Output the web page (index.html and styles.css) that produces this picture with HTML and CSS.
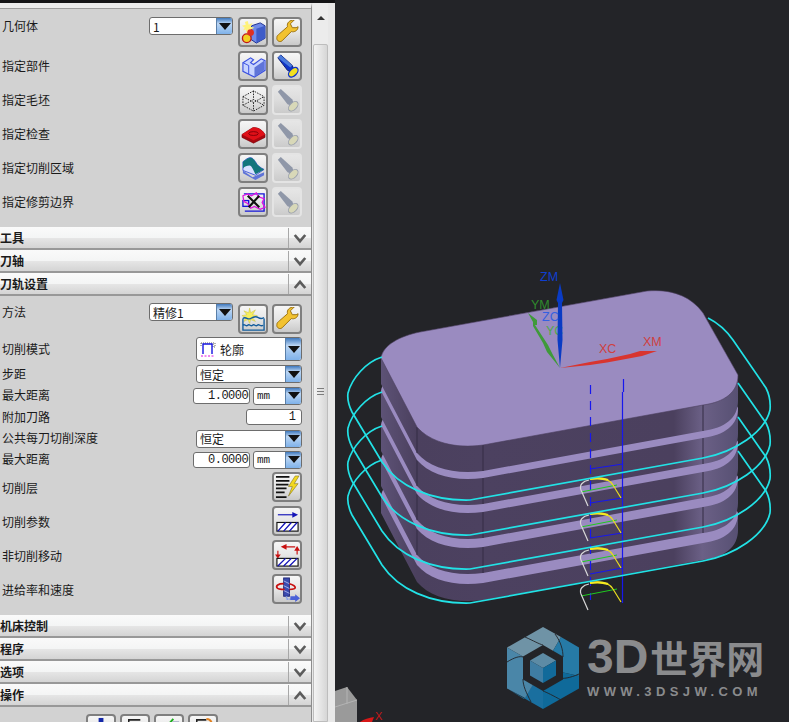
FILE: index.html
```html
<!DOCTYPE html>
<html lang="zh">
<head>
  <meta charset="utf-8">
  <title>刀轨设置</title>
  <link rel="stylesheet" href="styles.css">
</head>
<body>
  <!-- icons used by the panel buttons -->
  <svg class="sprite" xmlns="http://www.w3.org/2000/svg">
    <symbol id="i-geom" viewBox="0 0 26 26">
      <path d="M11 6l9-3 5 3v13l-9 5-6-4z" fill="#6f8ae8" stroke="#1c2f90"/>
      <path d="M16 9l9-3v13l-9 5z" fill="#3f5cc8"/>
      <path d="M7 1l1 4 4-2-2 4 4 1-4 2 2 3-4-2-2 3-1-4-3 1 2-3-3-2 4-1-1-3z" fill="#fff27a"/>
      <circle cx="6" cy="19" r="4.5" fill="#f2d020" stroke="#c01818" stroke-width="1.4"/>
      <circle cx="10" cy="13" r="3.5" fill="#e03020"/>
    </symbol>
    <symbol id="i-wrench" viewBox="0 0 26 26">
      <path d="M24 7c0 4-4 6-7 5l-9 9c-2 3-7 1-6-3 0-2 1-2 3-4l8-7c-1-4 2-7 7-7l-4 4 2 4 4 0z" fill="#f2c230" stroke="#9a7010"/>
    </symbol>
    <symbol id="i-part" viewBox="0 0 26 26">
      <path d="M2 9l8-5 3 2-3 3 3 2 8-6 4 2v10l-11 7-6-3-6-3z" fill="#c8d4ff" stroke="#3a50e0" stroke-width="1.2"/>
      <path d="M14 14l10-7v10l-10 7z" fill="#5f74d8"/>
      <path d="M2 9l6 3 0 9" fill="none" stroke="#3a50e0"/>
    </symbol>
    <symbol id="i-torch" viewBox="0 0 26 26">
      <path d="M3 4l3-3 12 11 3 8-8-3z" fill="#1034c8" stroke="#08186a"/>
      <path d="M6 1l12 11-2 2L3 4z" fill="#4a7adc"/>
      <ellipse cx="19" cy="19" rx="6" ry="3.6" transform="rotate(-45 19 19)" fill="#f2e020" stroke="#1034c8" stroke-width="1.4"/>
    </symbol>
    <symbol id="i-torch-off" viewBox="0 0 26 26">
      <path d="M3 4l3-3 12 11 3 8-8-3z" fill="#8f97a8"/>
      <ellipse cx="19" cy="19" rx="6" ry="3.6" transform="rotate(-45 19 19)" fill="#d8d8b8" stroke="#9aa0ac"/>
    </symbol>
    <symbol id="i-blank" viewBox="0 0 26 26">
      <path d="M2 9l11-6 11 6v9l-11 6-11-6zM2 9l11 6 11-6M13 15v9M2 18l11-6 11 6M13 3v9" fill="none" stroke="#222" stroke-dasharray="1.6 1.2"/>
    </symbol>
    <symbol id="i-check" viewBox="0 0 26 26">
      <path d="M1 13l11-7c5-1 10 2 13 7v3l-12 6L1 16z" fill="#a80810" stroke="#700008" stroke-width=".6"/>
      <path d="M1 13l11-7c5-1 10 2 13 7l-12 6z" fill="#e01018"/>
      <ellipse cx="13" cy="12" rx="5" ry="2" fill="none" stroke="#800008"/>
    </symbol>
    <symbol id="i-area" viewBox="0 0 26 26">
      <path d="M2 15l10 7 12-5v3l-9 5-13-7z" fill="#5f74d8"/>
      <path d="M2 15v-9l4-3c5-3 7 0 9 3 2 4 5 6 9 8l-9 6z" fill="#d8e0ff" stroke="#4a60d8"/>
      <path d="M2 13V6l4-3c5-3 7 0 9 3 2 4 5 6 9 8l-9 5c-2-4-4-9-6-9-3 0-5 1-7 3z" fill="#12757c"/>
    </symbol>
    <symbol id="i-trim" viewBox="0 0 26 26">
      <rect x="2" y="11" width="6" height="6" fill="none" stroke="#1414d8" stroke-width="1.4"/>
      <path d="M3 4h21v18H4" fill="none" stroke="#1414d8" stroke-width="1.4"/>
      <path d="M2 6l5-2 4 2 5-3 2 4 6 2-2 4 3 5-5 2-6-3-4 2-3-5-4-2z" fill="none" stroke="#e010e0" stroke-width="1.3"/>
      <path d="M7 6l12 12M19 6L8 18" stroke="#111" stroke-width="2.2"/>
    </symbol>
    <symbol id="i-method" viewBox="0 0 26 26">
      <path d="M9 1l1 5 5-3-3 5 5 1-5 2 3 4-5-2-1 4-2-4-4 2 2-4-4-2 5-1-3-4 5 2z" fill="#f6ee60" stroke="#c8c040" stroke-width=".5"/>
      <path d="M2 12c3-3 5 2 8 0s5-3 8-1 4 1 6 0M2 19c2-2 3 2 5 0s3 2 5 0 3 2 5 0 3 2 6 0" fill="none" stroke="#125c9c" stroke-width="1.4"/>
      <path d="M2 12v12h22V12M2 24h22" fill="none" stroke="#125c9c" stroke-width="1.4"/>
    </symbol>
    <symbol id="i-layers" viewBox="0 0 26 26">
      <path d="M1 2h14M1 6h14M1 10h13M1 14h11M1 18h9M1 23h11" stroke="#111" stroke-width="1.8"/>
      <path d="M21 1l-7 11h4l-4 10 10-13h-4l5-8z" fill="#f2d820" stroke="#807020" stroke-width=".6"/>
    </symbol>
    <symbol id="i-params" viewBox="0 0 26 26">
      <path d="M3 6h18" stroke="#1414b8" stroke-width="1.2"/>
      <path d="M24 6l-6-3v6z" fill="#1414b8"/>
      <rect x="2" y="14" width="22" height="9" fill="#fff" stroke="#111" stroke-width="1.2"/>
      <path d="M3 23l8-9M9 23l8-9M15 23l8-9" stroke="#1414b8" stroke-width="1.4"/>
    </symbol>
    <symbol id="i-noncut" viewBox="0 0 26 26">
      <path d="M9 4h12M3 8v6M23 6v6" stroke="#c81010" stroke-width="1.2"/>
      <path d="M6 4l6-3v6zM0 12h6l-3 4zM20 8h6l-3-5z" fill="#c81010"/>
      <rect x="2" y="16" width="22" height="8" fill="#fff" stroke="#111" stroke-width="1.2"/>
      <path d="M3 24l8-8M9 24l8-8M15 24l8-8" stroke="#1414b8" stroke-width="1.4"/>
    </symbol>
    <symbol id="i-feed" viewBox="0 0 26 26">
      <rect x="9" y="1" width="6" height="19" fill="#3c4cb0" stroke="#20287a"/>
      <path d="M9 4l6 3M9 9l6 3M9 14l6 3" stroke="#a8b0e8"/>
      <path d="M9 7C3 7 1 9 2 11s5 2 8 2m5 0c3 0 6 0 6-2 0-1-2-3-6-4" fill="none" stroke="#c81010" stroke-width="1.8"/>
      <path d="M12 20v3h5" fill="none" stroke="#88a0e8" stroke-dasharray="2 1" stroke-width="1.6"/>
      <path d="M16 20h5v-2l5 4-5 4v-2h-5z" fill="#4a60d8"/>
    </symbol>
    <symbol id="i-foot1" viewBox="0 0 26 26"><rect x="10" y="1" width="5" height="12" fill="#1428a8"/></symbol>
    <symbol id="i-foot2" viewBox="0 0 26 26"><path d="M6 11V3h12" fill="none" stroke="#222" stroke-width="1.6"/></symbol>
    <symbol id="i-foot3" viewBox="0 0 26 26"><path d="M4 8l4 4 9-10" fill="none" stroke="#20b020" stroke-width="2"/><path d="M16 6h7" stroke="#9aa0c0" stroke-width="3"/></symbol>
    <symbol id="i-foot4" viewBox="0 0 26 26"><path d="M6 11V3h10" fill="none" stroke="#222" stroke-width="1.6"/><path d="M16 2c4 0 6 3 6 8" fill="none" stroke="#e08020" stroke-width="2"/></symbol>
    <symbol id="chev-down" viewBox="0 0 16 12"><path d="M2 2l6 7 6-7" fill="none" stroke="#5c5c5c" stroke-width="3"/></symbol>
    <symbol id="chev-up" viewBox="0 0 16 12"><path d="M2 10l6-7 6 7" fill="none" stroke="#5c5c5c" stroke-width="3"/></symbol>
  </svg>

  <div class="app">
    <div class="side">
      <div class="topbar"></div>
      <div class="side-main">
        <div class="panel">
          <div class="group group-first">
            <div class="row row-tall row-first">
              <span class="label">几何体</span>
              <div class="combo combo-short"><span>1</span><i class="arrow"></i></div>
              <button class="icon-btn"><svg><use href="#i-geom"/></svg></button>
              <button class="icon-btn"><svg><use href="#i-wrench"/></svg></button>
            </div>
            <div class="row row-tall">
              <span class="label">指定部件</span>
              <button class="icon-btn"><svg><use href="#i-part"/></svg></button>
              <button class="icon-btn"><svg><use href="#i-torch"/></svg></button>
            </div>
            <div class="row row-tall">
              <span class="label">指定毛坯</span>
              <button class="icon-btn"><svg><use href="#i-blank"/></svg></button>
              <button class="icon-btn off"><svg><use href="#i-torch-off"/></svg></button>
            </div>
            <div class="row row-tall">
              <span class="label">指定检查</span>
              <button class="icon-btn"><svg><use href="#i-check"/></svg></button>
              <button class="icon-btn off"><svg><use href="#i-torch-off"/></svg></button>
            </div>
            <div class="row row-tall">
              <span class="label">指定切削区域</span>
              <button class="icon-btn"><svg><use href="#i-area"/></svg></button>
              <button class="icon-btn off"><svg><use href="#i-torch-off"/></svg></button>
            </div>
            <div class="row row-tall">
              <span class="label">指定修剪边界</span>
              <button class="icon-btn"><svg><use href="#i-trim"/></svg></button>
              <button class="icon-btn off"><svg><use href="#i-torch-off"/></svg></button>
            </div>
          </div>

          <div class="head"><span>工具</span><div class="chev"><svg><use href="#chev-down"/></svg></div></div>
          <div class="head"><span>刀轴</span><div class="chev"><svg><use href="#chev-down"/></svg></div></div>
          <div class="head"><span>刀轨设置</span><div class="chev"><svg><use href="#chev-up"/></svg></div></div>

          <div class="group group-path">
            <div class="row row-method">
              <span class="label">方法</span>
              <div class="combo combo-short"><span>精修1</span><i class="arrow"></i></div>
              <button class="icon-btn"><svg><use href="#i-method"/></svg></button>
              <button class="icon-btn"><svg><use href="#i-wrench"/></svg></button>
            </div>
            <div class="row row-mode">
              <span class="label">切削模式</span>
              <div class="combo combo-wide combo-big">
                <svg class="mode-icon" viewBox="0 0 16 16"><path d="M1 2h14v4H13V2M1 2v4" fill="none" stroke="#666" stroke-dasharray="1 1"/><path d="M3 13V3h9v10" fill="none" stroke="#1414e0" stroke-width="1.4"/><path d="M1 15h14" stroke="#e010e0" stroke-dasharray="2 1.5"/></svg>
                <span>轮廓</span><i class="arrow"></i>
              </div>
            </div>
            <div class="row row-step">
              <span class="label">步距</span>
              <div class="combo combo-wide"><span>恒定</span><i class="arrow"></i></div>
            </div>
            <div class="row row-dist">
              <span class="label">最大距离</span>
              <div class="num num-clip">1.00000</div>
              <div class="combo combo-unit"><span>mm</span><i class="arrow"></i></div>
            </div>
            <div class="row row-extra">
              <span class="label">附加刀路</span>
              <div class="num num-int">1</div>
            </div>
            <div class="row row-depth">
              <span class="label">公共每刀切削深度</span>
              <div class="combo combo-wide"><span>恒定</span><i class="arrow"></i></div>
            </div>
            <div class="row row-depth">
              <span class="label">最大距离</span>
              <div class="num num-clip">0.00000</div>
              <div class="combo combo-unit"><span>mm</span><i class="arrow"></i></div>
            </div>
            <div class="row row-tall row-lower"><span class="label">切削层</span><button class="icon-btn"><svg><use href="#i-layers"/></svg></button></div>
            <div class="row row-tall row-lower"><span class="label">切削参数</span><button class="icon-btn"><svg><use href="#i-params"/></svg></button></div>
            <div class="row row-tall row-lower"><span class="label">非切削移动</span><button class="icon-btn"><svg><use href="#i-noncut"/></svg></button></div>
            <div class="row row-tall row-lower"><span class="label">进给率和速度</span><button class="icon-btn"><svg><use href="#i-feed"/></svg></button></div>
          </div>

          <div class="head"><span>机床控制</span><div class="chev"><svg><use href="#chev-down"/></svg></div></div>
          <div class="head"><span>程序</span><div class="chev"><svg><use href="#chev-down"/></svg></div></div>
          <div class="head"><span>选项</span><div class="chev"><svg><use href="#chev-down"/></svg></div></div>
          <div class="head"><span>操作</span><div class="chev"><svg><use href="#chev-up"/></svg></div></div>

          <div class="actions">
            <button class="icon-btn"><svg><use href="#i-foot1"/></svg></button>
            <button class="icon-btn"><svg><use href="#i-foot2"/></svg></button>
            <button class="icon-btn"><svg><use href="#i-foot3"/></svg></button>
            <button class="icon-btn"><svg><use href="#i-foot4"/></svg></button>
          </div>
        </div>

        <div class="scroll">
          <div class="scroll-up"><i></i></div>
          <div class="scroll-thumb"><div class="grip"></div></div>
        </div>
      </div>
    </div>

    <div class="viewport">
      <!-- viewBox keeps the page's own coordinates -->
      <svg class="model" viewBox="335 0 454 722">
        <defs>
          <linearGradient id="sideFill" gradientUnits="userSpaceOnUse" x1="381" y1="0" x2="738" y2="0">
            <stop offset="0" stop-color="#5d5276"/>
            <stop offset=".1" stop-color="#4b405e"/>
            <stop offset=".28" stop-color="#4c4160"/>
            <stop offset=".82" stop-color="#4b405e"/>
            <stop offset=".9" stop-color="#6b6086"/>
            <stop offset="1" stop-color="#575073"/>
          </linearGradient>
          <path id="face" d="M381 358C383 345 400 336 420 332L647 291C670 289 690 295 703 313L738 375C738 392 725 402 703 405L483 445C455 449 430 442 417 427Z"/>
          <path id="side" d="M381 358V384L417 453C430 468 455 475 483 471L703 431C725 428 738 418 738 401V375L703 313C690 295 670 289 647 291L420 332Z"/>
          <path id="sideLow" d="M381 358V375L417 444C430 459 455 466 483 462L703 422C725 419 738 409 738 392V375L703 313C690 295 670 289 647 291L420 332Z"/>
          <path id="facets" d="M417 427V453M483 445V471M703 405V431" stroke="#352c45" fill="none"/>
          <g id="arch" fill="none">
            <path d="M581 492L617 485" stroke="#1fc91f"/>
            <path d="M588 506L581 490C579 485 583 481 589 480" stroke="#d8d8d8" stroke-width="1.2"/>
            <path d="M590 479C600 477 609 478 613 485L621 498" stroke="#e8dc20" stroke-width="1.2"/>
            <path d="M590 479C596 478 602 478 608 480" stroke="#f6ea20" stroke-width="2.2"/>
          </g>
          <path id="loop" d="M382 357C366 362 352 378 348 393C347 400 349 406 352 412L382 462C398 486 430 501 470 500L703 458C735 452 765 432 770 410C771 400 768 392 766 388L738 348"/>
        </defs>

        <use href="#sideLow" y="138" fill="url(#sideFill)"/>
        <use href="#face" y="138" fill="#9a8bc0"/>
        <use href="#side" y="102" fill="url(#sideFill)"/>
        <use href="#facets" y="102"/>
        <use href="#face" y="102" fill="#9a8bc0"/>
        <use href="#side" y="67" fill="url(#sideFill)"/>
        <use href="#facets" y="67"/>
        <use href="#face" y="67" fill="#9a8bc0"/>
        <use href="#side" y="33" fill="url(#sideFill)"/>
        <use href="#facets" y="33"/>
        <use href="#face" y="33" fill="#9a8bc0"/>
        <use href="#side" fill="url(#sideFill)"/>
        <use href="#facets"/>
        <use href="#face" fill="#9a8bc0" stroke="#4b405e" stroke-width=".6"/>

        <g class="tool-lines">
          <path d="M590.5 385V600" stroke-dasharray="9 7"/>
          <path d="M623.5 379V392M622.5 392V603"/>
          <path d="M590 469L623 464M590 503L622 498M590 538L622 533M590 574L622 568"/>
        </g>
        <use href="#arch"/>
        <use href="#arch" y="35"/>
        <use href="#arch" y="70"/>
        <use href="#arch" y="104"/>

        <g class="loops">
          <path d="M382 357C366 362 352 378 348 393C347 400 349 406 352 412L382 462C398 486 430 501 470 500L703 458C735 452 765 432 770 410C771 400 768 392 766 388L733 340C726 330 718 323 708 318"/>
          <use href="#loop" y="35"/>
          <use href="#loop" y="69"/>
          <use href="#loop" y="103"/>
        </g>

        <text class="axis axis-y2" x="546" y="335">YC</text>
        <polygon points="528,313 537,320 537,325 535,325 548,345 553,355 560,368 547,352 543,343 533,326 533,322" fill="#3f9a3a"/>
        <polygon points="560,283 563.5,300 562,303 562.5,340 560,368 557.5,340 558,303 556.5,300" fill="#0a3bc4"/>
        <polygon points="560,368 590,362 607,359 630,354 640,351 657,351 642,356 607,362.5 590,365" fill="#d8352f"/>
        <text class="axis axis-z" x="540" y="281">ZM</text>
        <text class="axis axis-y" x="531" y="309">YM</text>
        <text class="axis axis-z2" x="542" y="321">ZC</text>
        <text class="axis axis-x" x="599" y="353">XC</text>
        <text class="axis axis-x" x="643" y="346">XM</text>

        <path d="M335 691L347 687L357 700V722H335Z" fill="#9a9a9a"/>
        <path d="M335 707L357 700M347 687V704" stroke="#b4b4b4" fill="none"/>
        <path d="M360 722C364 719 369 718 374 717L372 722Z" fill="#d81818"/>
        <text class="axis axis-small" x="375" y="720">X</text>
      </svg>

      <div class="watermark">
        <svg class="mark" viewBox="0 0 74 84">
          <polygon points="37,42 1,21.5 37,1 55,11" fill="#6f93a6"/>
          <polygon points="37,42 55,11 73,21.5 73,50" fill="#267aa6"/>
          <polygon points="37,42 73,50 73,62.5 37,83" fill="#0f6a9a"/>
          <polygon points="37,42 37,83 1,62.5 18,73" fill="#1a6f9f"/>
          <polygon points="37,42 19,72 1,62.5 1,21.5" fill="#4a86a8"/>
          <g class="mark-cuts">
            <path d="M49 8C55 16 57 24 57 31"/>
            <path d="M73 48C64 52 57 53 53 52"/>
            <path d="M55 74C48 70 40 66 37 65"/>
            <path d="M25 76C20 66 17 60 17 53"/>
            <path d="M1 36C9 31 14 30 17 31"/>
            <path d="M19 11C28 15 33 18 37 19"/>
          </g>
          <polygon class="mark-ring" points="37,19 57,30.5 57,53.5 37,65 17,53.5 17,30.5"/>
          <polygon points="37,27 50,34.5 37,42 24,34.5" fill="#5d8ba5"/>
          <polygon points="24,34.5 37,42 37,57 24,49.5" fill="#3f7da3"/>
          <polygon points="50,34.5 37,42 37,57 50,49.5" fill="#126a9a"/>
        </svg>
        <div class="brand">
          <div class="brand-name"><span class="brand-en">3D</span><span class="brand-cn">世界网</span></div>
          <div class="brand-url">WWW.3DSJW.COM</div>
        </div>
      </div>
    </div>
  </div>
</body>
</html>
```

FILE: styles.css
```css
html, body {
  margin: 0;
  padding: 0;
  height: 100%;
  overflow: hidden;
}

body {
  font-family: "Noto Sans CJK SC", "Liberation Sans", sans-serif;
  font-size: 12px;
  color: #1a1a1a;
  background-color: #232428;
}

.sprite {
  display: none;
}

.app {
  display: flex;
  width: 789px;
  height: 722px;
  overflow: hidden;
}

.side {
  width: 335px;
  flex-shrink: 0;
  display: flex;
  flex-direction: column;
}

.topbar {
  height: 3px;
  background-color: #141416;
}

.side-main {
  flex: 1;
  display: flex;
  min-height: 0;
}

/* left panel */
.panel {
  width: 311px;
  flex-shrink: 0;
  background-color: #d2d2d2;
  border-right: 1px solid #8d8d8d;
  border-top: 5px solid #ebebeb;
  box-shadow: inset 0 1px 0 #9c9c9c;
}

.group {
  display: flex;
  flex-direction: column;
}

.group-first {
  padding: 7px 0 8px;
}

.group-path {
  padding: 8px 0 9px;
}

.row {
  display: flex;
  align-items: center;
  justify-content: flex-end;
  gap: 4px;
  padding: 0 9px 0 2px;
}

.label {
  margin-right: auto;
  line-height: 14px;
  white-space: nowrap;
}

.row-tall { height: 34px; }
.row-first .label,
.row-first .combo { margin-bottom: 12px; }
.row-lower .label { margin-top: 2px; }
.row-method { height: 32px; align-items: flex-start; }
.row-method .label { margin-top: 1px; }
.row-method .combo { margin-top: -1px; }
.row-mode { height: 26px; }
.row-step { height: 24px; }
.row-dist { height: 19px; gap: 3px; }
.row-dist .label { margin-bottom: 2px; }
.row-extra { height: 23px; }
.row-depth { height: 21px; gap: 3px; }
.row-depth .label { margin-bottom: 2px; }

.icon-btn {
  width: 30px;
  height: 30px;
  padding: 0;
  flex-shrink: 0;
  display: flex;
  align-items: center;
  justify-content: center;
  border: 2px solid #7f7f7f;
  border-radius: 4px;
  background: linear-gradient(#f6f6f6, #e6e6e6 50%, #c9c9c9);
}

.icon-btn svg {
  width: 25px;
  height: 25px;
}

.icon-btn.off {
  border-color: #e4e4e4;
  background: linear-gradient(#e6e6e6, #dcdcdc 50%, #cbcbcb);
}

.combo {
  display: flex;
  align-items: center;
  box-sizing: border-box;
  height: 18px;
  padding-left: 3px;
  background-color: #fff;
  border: 1px solid #6d6d6d;
  border-radius: 3px;
  overflow: hidden;
  font-size: 12px;
}

.combo span {
  flex: 1;
  white-space: nowrap;
}

.combo-short {
  width: 84px;
  margin-right: 1px;
}

.combo-wide {
  width: 106px;
}

.combo-big {
  height: 24px;
}

.combo-unit {
  width: 49px;
  font-family: "Liberation Mono", monospace;
  font-size: 11px;
}

.mode-icon {
  width: 16px;
  height: 16px;
  margin-right: 4px;
}

.arrow {
  align-self: stretch;
  width: 15px;
  flex-shrink: 0;
  display: flex;
  align-items: center;
  justify-content: center;
  background: linear-gradient(#3e78bd, #bcd6f3 35%, #7fb2ea);
  border-left: 1px solid #5a7fa8;
}

.arrow::after {
  content: "";
  border-left: 6px solid transparent;
  border-right: 6px solid transparent;
  border-top: 7px solid #111;
}

.num {
  box-sizing: border-box;
  height: 16px;
  line-height: 14px;
  background-color: #fff;
  border: 1px solid #6d6d6d;
  border-radius: 3px;
  font-family: "Liberation Mono", monospace;
  font-size: 12px;
  white-space: nowrap;
  overflow: hidden;
}

.num-clip {
  width: 57px;
  padding-left: 14px;
  letter-spacing: -.5px;
}

.num-int {
  width: 56px;
  padding-right: 5px;
  text-align: right;
}

/* collapsible section bars */
.head {
  box-sizing: border-box;
  height: 23px;
  display: flex;
  align-items: center;
  justify-content: space-between;
  padding-top: 1px;
  background: linear-gradient(#fafafa, #f4f5f5 50%, #e6e6e6 52%, #d4d4d4);
  border-bottom: 2px solid #989898;
  font-weight: 700;
  line-height: 14px;
}

.chev {
  width: 22px;
  height: 100%;
  display: flex;
  align-items: center;
  justify-content: center;
  border-left: 1px solid #a8a8a8;
}

.chev svg {
  width: 14px;
  height: 11px;
}

.actions {
  display: flex;
  gap: 4px;
  padding: 7px 0 0 86px;
}

/* scrollbar beside the panel */
.scroll {
  flex: 1;
  background-color: #e8e8e8;
  padding-left: 1px;
  padding-right: 7px;
  display: flex;
  flex-direction: column;
}

.scroll-up {
  height: 41px;
  flex-shrink: 0;
  display: flex;
  justify-content: center;
  padding-top: 13px;
  box-sizing: border-box;
  background-color: #ececec;
}

.scroll-up i {
  width: 0;
  height: 0;
  border-left: 4px solid transparent;
  border-right: 4px solid transparent;
  border-bottom: 4px solid #333;
}

.scroll-thumb {
  flex: 1;
  display: flex;
  align-items: center;
  justify-content: center;
  border: 1px solid #bdbdbd;
  border-radius: 2px 2px 0 0;
  background: linear-gradient(90deg, #f4f4f4, #d6d6d6);
}

.grip {
  width: 7px;
  height: 7px;
  margin-top: 17px;
  background: repeating-linear-gradient(#7c7c7c 0 1px, transparent 1px 3px);
}

/* graphics window */
.viewport {
  position: relative;
  flex: 1;
  background-color: #232428;
  overflow: hidden;
}

.model {
  display: block;
  width: 454px;
  height: 722px;
}

.tool-lines path {
  fill: none;
  stroke: #1717ee;
  stroke-width: 1.2;
}

.loops path,
.loops use {
  fill: none;
  stroke: #22e2e6;
  stroke-width: 1.7;
}

.axis {
  font-family: "Liberation Sans", sans-serif;
  font-size: 12.5px;
}

.axis-z { fill: #0f3fd0; }
.axis-z2 { fill: #3560e0; }
.axis-y { fill: #2f8a2c; }
.axis-y2 { fill: #4fa84c; }
.axis-x { fill: #cf4040; }
.axis-small { fill: #c81818; font-size: 11px; }

/* logo over the graphics window */
.watermark {
  position: absolute;
  left: 171px;
  top: 626px;
  display: flex;
  gap: 7px;
}

.mark {
  width: 74px;
  height: 84px;
}

.mark-cuts path {
  fill: none;
  stroke: #232428;
  stroke-width: .9;
}

.mark-ring {
  fill: #232428;
}

.brand {
  color: #8a8b8d;
  display: flex;
  flex-direction: column;
}

.brand-name {
  display: flex;
  align-items: baseline;
  height: 50px;
  margin-top: 6px;
  font-weight: 700;
  line-height: 50px;
}

.brand-en {
  font-family: "Liberation Sans", sans-serif;
  font-size: 48px;
  margin-right: 2px;
}

.brand-cn {
  font-family: "Noto Sans CJK SC", sans-serif;
  font-size: 38px;
}

.brand-url {
  margin-top: 2px;
  font-family: "Liberation Sans", sans-serif;
  font-size: 13px;
  font-weight: 700;
  letter-spacing: 4.4px;
  white-space: nowrap;
}
```
